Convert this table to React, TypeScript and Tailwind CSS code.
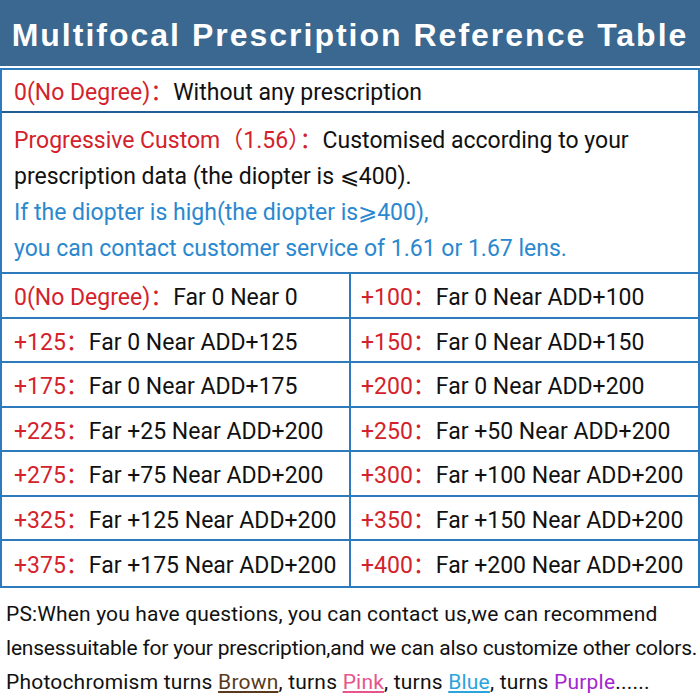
import React from "react";

const RED = "text-[#d3222b]";
const C = "\uFF1A";

const rows: [string, string, string, string][] = [
  ["0(No Degree)" + C, "Far 0 Near 0", "+100" + C, "Far 0 Near ADD+100"],
  ["+125" + C, "Far 0 Near ADD+125", "+150" + C, "Far 0 Near ADD+150"],
  ["+175" + C, "Far 0 Near ADD+175", "+200" + C, "Far 0 Near ADD+200"],
  ["+225" + C, "Far +25 Near ADD+200", "+250" + C, "Far +50 Near ADD+200"],
  ["+275" + C, "Far +75 Near ADD+200", "+300" + C, "Far +100 Near ADD+200"],
  ["+325" + C, "Far +125 Near ADD+200", "+350" + C, "Far +150 Near ADD+200"],
  ["+375" + C, "Far +175 Near ADD+200", "+400" + C, "Far +200 Near ADD+200"],
];

function Cell({ a, b, right }: { a: string; b: string; right?: boolean }) {
  return (
    <div className={`flex items-center h-full pt-[6px] whitespace-nowrap ${right ? "pl-[10px]" : "pl-[12px]"}`}>
      <span className={RED}>{a}</span>
      <span className="text-[#111]">{b}</span>
    </div>
  );
}

export default function App() {
  return (
    <div
      className="w-[700px] h-[700px] bg-white overflow-hidden text-[23px] text-[#111]"
      style={{ fontFamily: "Roboto, 'Noto Sans CJK SC', sans-serif" }}
    >
      <div className="h-[66px] bg-[#3a6890] flex items-center justify-center pt-[3px]">
        <span
          className="text-white font-bold text-[32px] tracking-[2px] whitespace-nowrap"
          style={{ fontFamily: "'Liberation Sans', Arial, sans-serif" }}
        >
          Multifocal Prescription Reference Table
        </span>
      </div>
      <div className="mt-[2px] border-2 border-[#2d7bbd]">
        <div className="h-[43px] flex items-center pl-[12px] pt-[6px] border-b-2 border-[#1f5f94] whitespace-nowrap">
          <span className={RED}>0(No Degree){C}</span>
          <span>Without any prescription</span>
        </div>
        <div className="h-[161px] pl-[12px] pt-[10px] leading-[36px] border-b-2 border-[#2d7bbd] whitespace-nowrap">
          <div>
            <span className={RED}>Progressive Custom{"\uFF08"}1.56{"\uFF09"}{C}</span>
            <span>Customised according to your</span>
          </div>
          <div>prescription data (the diopter is {"\u2A7D"}400).</div>
          <div className="text-[#2a88cf]">If the diopter is high(the diopter is{"\u2A7E"}400),</div>
          <div className="text-[#2a88cf]">you can contact customer service of 1.61 or 1.67 lens.</div>
        </div>
        <div className="grid grid-cols-[349px_1fr]">
          {rows.map((r, i) => (
            <React.Fragment key={i}>
              <div className={`h-[44.5px] border-r-2 border-[#2d7bbd] ${i < rows.length - 1 ? "border-b-2" : ""}`}>
                <Cell a={r[0]} b={r[1]} />
              </div>
              <div className={`h-[44.5px] border-[#2d7bbd] ${i < rows.length - 1 ? "border-b-2" : ""}`}>
                <Cell a={r[2]} b={r[3]} right />
              </div>
            </React.Fragment>
          ))}
        </div>
      </div>
      <div className="pl-[6px] pt-[9px] leading-[34px] text-[21px] whitespace-nowrap">
        <div className="tracking-[0.15px]">PS:When you have questions, you can contact us,we can recommend</div>
        <div className="tracking-[-0.22px]">lensessuitable for your prescription,and we can also customize other colors.</div>
        <div className="tracking-[0.2px]">
          Photochromism turns{" "}
          <span className="text-[#5a3a1c] underline decoration-[#5a3a1c]">Brown</span>, turns{" "}
          <span className="text-[#e8548c] underline decoration-[#e8548c]">Pink</span>, turns{" "}
          <span className="text-[#2ba3dd] underline decoration-[#2ba3dd]">Blue</span>, turns{" "}
          <span className="text-[#a526cf]">Purple</span>......
        </div>
      </div>
    </div>
  );
}
